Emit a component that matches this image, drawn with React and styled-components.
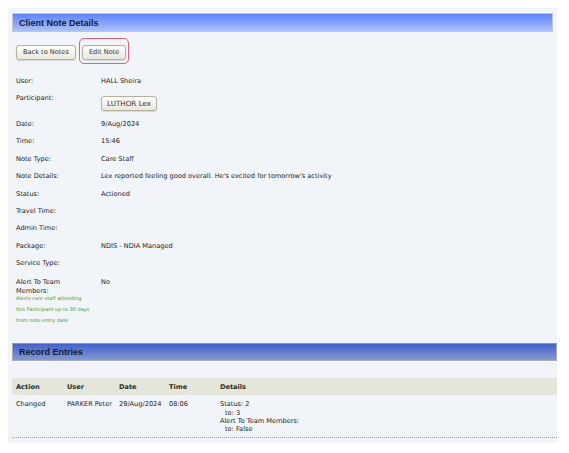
import styled, { createGlobalStyle } from "styled-components";

const GlobalStyle = createGlobalStyle`
  body {
    margin: 8px;
    background: #ffffff;
    font-family: "DejaVu Sans", Verdana, sans-serif;
    color: #222;
  }
`;

const Panel = styled.div`
  width: 549px;
  background: #f1f5f9;
  padding: 5px 0 5px 4px;
  box-sizing: border-box;
`;

const SectionHeader = styled.div`
  height: ${(p) => (p.dark ? "18px" : "19px")};
  box-sizing: border-box;
  display: flex;
  align-items: center;
  padding-left: 6px;
  font-family: "Liberation Sans", Arial, sans-serif;
  font-weight: bold;
  font-size: 9px;
  color: #111a33;
  margin-right: ${(p) => (p.dark ? "0" : "4px")};
  margin-top: ${(p) => (p.dark ? "12.5px" : "0")};
  border: 1px solid ${(p) => (p.dark ? "#a9adb5" : "#c4c8c8")};
  border-top-color: ${(p) => (p.dark ? "#8f939a" : "#c4c8c8")};
  background: ${(p) =>
    p.dark
      ? "linear-gradient(to bottom, #4262cc, #8498d0)"
      : "linear-gradient(to bottom, #5d83ff, #adc1f6)"};
`;

const Toolbar = styled.div`
  display: flex;
  gap: 6px;
  padding-left: 4px;
  margin-top: 13px;
`;

const Button = styled.button`
  position: relative;
  height: 15px;
  padding: 0 ${(p) => (p.tight ? "5px" : "6px")};
  font-family: "DejaVu Sans", Verdana, sans-serif;
  font-size: ${(p) => (p.large ? "7.2px" : "6.6px")};
  color: #333;
  background: linear-gradient(to bottom, #fdfdf8, #ebe9dc);
  border: 1px solid #b4b29c;
  border-radius: 3px;
  box-shadow: 0 1px 1px rgba(0, 0, 0, 0.12);
  line-height: 13px;
  cursor: pointer;

  ${(p) =>
    p.highlight &&
    `
    &::after {
      content: "";
      position: absolute;
      top: -8px;
      bottom: -5px;
      left: -4px;
      right: -4px;
      border: 1.5px solid #e7607a;
      border-radius: 5px;
      pointer-events: none;
    }
  `}
`;

const Details = styled.div`
  margin-top: 13px;
  padding-left: 4px;
`;

const Row = styled.div`
  display: grid;
  grid-template-columns: 85px 1fr;
  align-items: start;
  padding: 5px 0;
  font-size: 6.6px;
  line-height: ${(p) => (p.tall ? "9px" : "7.4px")};
`;

const Label = styled.div`
  max-width: 66px;
`;

const Value = styled.div``;

const Hint = styled.div`
  color: #3f9a22;
  font-size: 5px;
  line-height: 11px;
  margin-top: -2.9px;
  white-space: nowrap;
`;

const Participant = styled(Button)`
  margin-top: 0.6px;
`;

const TableHead = styled.div`
  display: grid;
  grid-template-columns: 51px 52px 50px 51px 1fr;
  height: 17px;
  align-items: center;
  margin-top: 17px;
  padding-left: 4px;
  background: #e4e6d9;
  font-size: 6.6px;
  font-weight: bold;
  color: #2b2b2b;
`;

const TableRow = styled.div`
  display: grid;
  grid-template-columns: 51px 52px 50px 51px 1fr;
  align-items: start;
  padding: 5px 0 4px 4px;
  border-bottom: 1px dotted #9a9a9a;
  font-size: 6.6px;
  line-height: 8.3px;
`;

const Change = styled.div`
  padding-left: ${(p) => (p.indent ? "5px" : "0")};
`;

const rows = [
  ["User:", "HALL Sheira"],
  ["Participant:", null],
  ["Date:", "9/Aug/2024"],
  ["Time:", "15:46"],
  ["Note Type:", "Care Staff"],
  ["Note Details:", "Lex reported feeling good overall. He's excited for tomorrow's activity"],
  ["Status:", "Actioned"],
  ["Travel Time:", ""],
  ["Admin Time:", ""],
  ["Package:", "NDIS - NDIA Managed"],
  ["Service Type:", ""],
];

export default function App() {
  return (
    <>
      <GlobalStyle />
      <Panel>
        <SectionHeader>Client Note Details</SectionHeader>
        <Toolbar>
          <Button>Back to Notes</Button>
          <Button highlight>Edit Note</Button>
        </Toolbar>

        <Details>
          {rows.map(([label, value]) => (
            <Row key={label}>
              <Label>{label}</Label>
              {value === null ? (
                <div>
                  <Participant large tight>LUTHOR Lex</Participant>
                </div>
              ) : (
                <Value>{value}</Value>
              )}
            </Row>
          ))}
          <Row tall>
            <div>
              <Label>Alert To Team Members:</Label>
              <Hint>
                Alerts care staff attending
                <br />
                this Participant up to 30 days
                <br />
                from note entry date
              </Hint>
            </div>
            <Value>No</Value>
          </Row>
        </Details>

        <SectionHeader dark>Record Entries</SectionHeader>
        <TableHead>
          <div>Action</div>
          <div>User</div>
          <div>Date</div>
          <div>Time</div>
          <div>Details</div>
        </TableHead>
        <TableRow>
          <div>Changed</div>
          <div>PARKER Peter</div>
          <div>29/Aug/2024</div>
          <div>08:06</div>
          <div>
            <Change>Status: 2</Change>
            <Change indent>to: 3</Change>
            <Change>Alert To Team Members:</Change>
            <Change indent>to: False</Change>
          </div>
        </TableRow>
      </Panel>
    </>
  );
}
